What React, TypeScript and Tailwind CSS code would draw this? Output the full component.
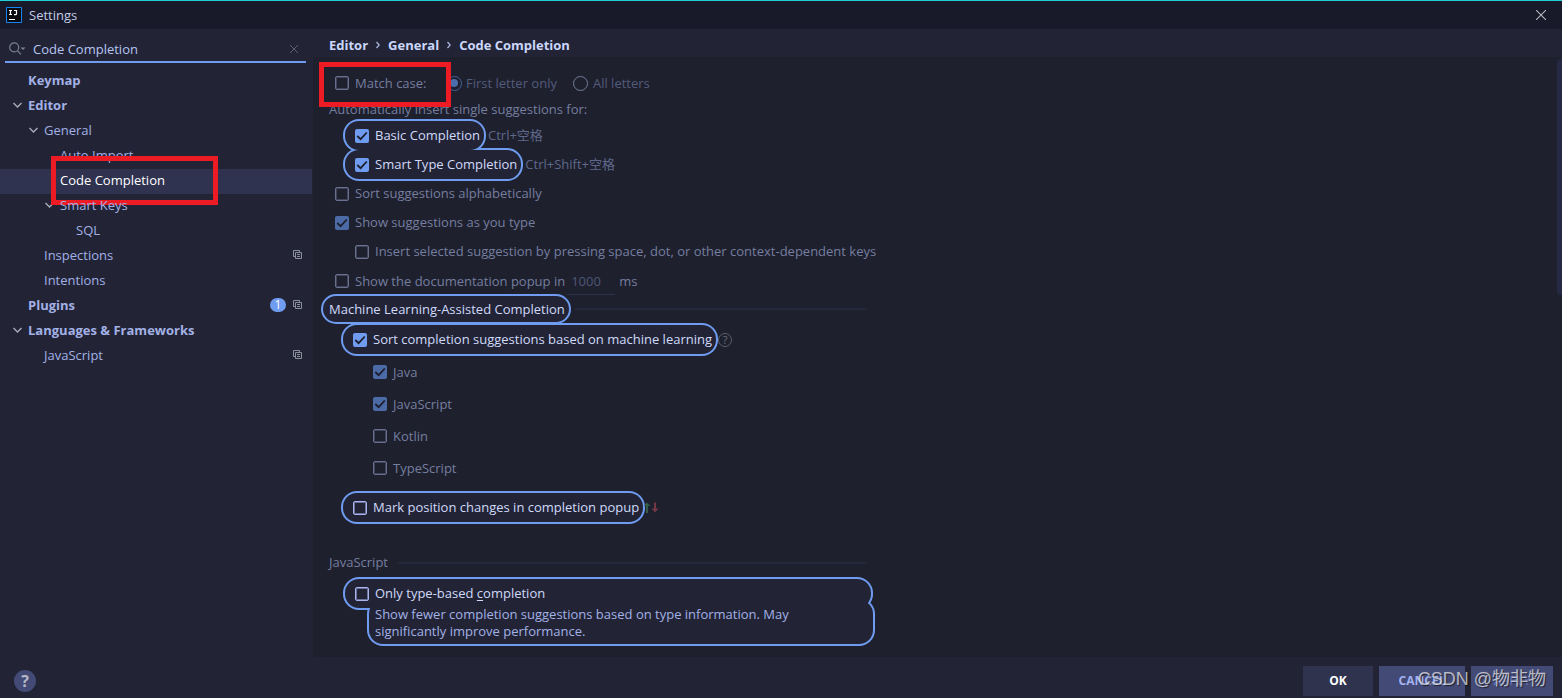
import type { ReactNode } from 'react'

interface TreeItem {
  label: string
  level: number
  bold?: boolean
  open?: boolean
  selected?: boolean
  badge?: number
  copy?: boolean
}

const TREE: TreeItem[] = [
  { label: 'Keymap', level: 0, bold: true },
  { label: 'Editor', level: 0, bold: true, open: true },
  { label: 'General', level: 1, open: true },
  { label: 'Auto Import', level: 2 },
  { label: 'Code Completion', level: 2, selected: true },
  { label: 'Smart Keys', level: 2, open: true },
  { label: 'SQL', level: 3 },
  { label: 'Inspections', level: 1, copy: true },
  { label: 'Intentions', level: 1 },
  { label: 'Plugins', level: 0, bold: true, badge: 1, copy: true },
  { label: 'Languages & Frameworks', level: 0, bold: true, open: true },
  { label: 'JavaScript', level: 1, copy: true },
]

const INDENT = ['pl-3', 'pl-7', 'pl-11', 'pl-15']

const ML_LANGUAGES = [
  { label: 'Java', checked: true },
  { label: 'JavaScript', checked: true },
  { label: 'Kotlin', checked: false },
  { label: 'TypeScript', checked: false },
]

// The outline sits two layers below the text and the fill one layer below,
// so neighbouring highlights melt into one shape.
const RING =
  'relative before:absolute before:-z-20 before:rounded-2xl before:bg-[#6f9cf0] after:absolute after:-z-10 after:rounded-[14px] after:bg-[#222435]'
const RING_ROW = 'before:-left-3 before:-right-1.5 after:-left-2.5 after:-right-1'
const RING_TALL = 'before:-inset-y-0.5 after:inset-y-0'
const RING_FLUSH = 'before:inset-y-0 after:inset-y-0.5'

function Chevron() {
  return (
    <svg className="w-2.5 h-2.5" viewBox="0 0 10 10" fill="none" stroke="#a9abb5" strokeWidth="1.4">
      <path d="M1.5 3l4 4 4-4" />
    </svg>
  )
}

function CopyIcon() {
  return (
    <svg className="w-[9px] h-[9px]" viewBox="0 0 9 9" fill="none" stroke="#8b8e9b">
      <path d="M2.5 6.5h-2v-6h6v2" />
      <path d="M2.5 2.5h6v6h-6zM4 4.5h3M4 6.5h3" />
    </svg>
  )
}

function TreeRow({ item }: { item: TreeItem }) {
  return (
    <li
      className={`flex items-center h-[25px] mr-px pr-2.5 pb-1 ${INDENT[item.level]} ${
        item.selected ? 'bg-[#303350] text-white' : 'text-[#a3b1e6]'
      }`}
    >
      <span className="w-4 shrink-0">{item.open && <Chevron />}</span>
      <span className={`relative leading-5 ${item.bold ? 'font-bold' : ''}`}>
        {item.label}
        {item.selected && (
          <span className="absolute -left-[9px] -top-3.5 w-[167px] h-[49px] border-5 border-[#ed1c24]" />
        )}
      </span>
      <span className="ml-auto flex items-center gap-[7px]">
        {item.badge && (
          <span className="w-4 h-3.5 rounded-full bg-[#6f9cf0] text-white text-xs leading-[14px] text-center">
            {item.badge}
          </span>
        )}
        {item.copy && <CopyIcon />}
      </span>
    </li>
  )
}

interface CheckProps {
  children: ReactNode
  checked?: boolean
  bright?: boolean
  className?: string
}

function Check({ children, checked, bright, className = '' }: CheckProps) {
  return (
    <label className={`flex items-center gap-1.5 ${bright ? 'text-[#d0dafa]' : 'text-[#757e9f]'} ${className}`}>
      <span className="grid w-3.5 h-3.5 shrink-0">
        <input
          type="checkbox"
          defaultChecked={checked}
          className={`peer appearance-none [grid-area:1/1] w-3.5 h-3.5 rounded-xs border checked:border-0 checked:shadow-none ${
            bright
              ? 'border-[#a9b5ec] checked:bg-[#6f9cf0] shadow-[inset_0_0_0_1px_#6a719b]'
              : 'border-[#69718f] checked:bg-[#4c6aa6] shadow-[inset_0_0_0_1px_#3f445b]'
          }`}
        />
        <svg
          className="[grid-area:1/1] w-3.5 h-3.5 hidden peer-checked:block pointer-events-none"
          viewBox="0 0 14 14"
          fill="none"
          stroke="#1c1e2c"
          strokeWidth="1.8"
        >
          <path d="M2.3 7l3.3 3.2L11.8 3.5" />
        </svg>
      </span>
      <span className="leading-5 pb-px">{children}</span>
    </label>
  )
}

function Radio({ label, checked }: { label: string; checked?: boolean }) {
  return (
    <label className="flex items-center gap-1 text-[#535b7b]">
      <span className="grid place-items-center w-4 h-4">
        <input
          type="radio"
          name="match-case"
          defaultChecked={checked}
          className="peer appearance-none [grid-area:1/1] w-[15px] h-[15px] rounded-full border border-[#757d9c] checked:border-[#44619a]"
        />
        <span className="[grid-area:1/1] w-2 h-2 rounded-full peer-checked:bg-[#4c6dab]" />
      </span>
      <span className="leading-5 pb-px">{label}</span>
    </label>
  )
}

function Sidebar() {
  return (
    <aside className="w-[313px] shrink-0 flex flex-col">
      <div className="ml-[5px] mr-[7px] h-[34px] pt-2 pl-1 pr-2 flex items-center border-b-2 border-[#6f9cf0]">
        <svg className="w-[17px] h-3.5 shrink-0" viewBox="0 0 17 14" fill="none" stroke="#7d808d" strokeWidth="1.2">
          <circle cx="5.2" cy="5.4" r="4.5" />
          <path d="M8.5 8.8l3.5 3.5" />
          <path d="M11.5 5.5h5l-2.5 2.5z" fill="#7d808d" stroke="none" />
        </svg>
        <input
          type="text"
          aria-label="Search settings"
          defaultValue="Code Completion"
          className="flex-1 min-w-0 ml-[7px] h-5 bg-transparent text-[#b7c4f2] outline-none"
        />
        <button type="button" aria-label="Clear">
          <svg className="w-2 h-2" viewBox="0 0 8 8" stroke="#5d606f">
            <path d="M0 0l8 8M8 0l-8 8" />
          </svg>
        </button>
      </div>
      <ul className="pt-1.5">
        {TREE.map((item) => (
          <TreeRow key={item.label} item={item} />
        ))}
      </ul>
    </aside>
  )
}

function Breadcrumb() {
  return (
    <nav className="h-7 pl-4 pt-1 flex items-center gap-2 font-bold text-[#cbd6fb]">
      <span>Editor</span>
      <Separator />
      <span>General</span>
      <Separator />
      <span>Code Completion</span>
    </nav>
  )
}

function Separator() {
  return (
    <svg className="w-1 h-2" viewBox="0 0 4 8" fill="none" stroke="#a9b5dc" strokeWidth="1.3">
      <path d="M0.5 1l2.7 3-2.7 3" />
    </svg>
  )
}

function Panel() {
  return (
    <div className="relative isolate flex-1 min-h-0 overflow-hidden bg-[#1e202e] pl-4 pt-[11px]">
      <div className="max-w-[538px]">
        <div className="flex items-center h-[30px] pl-1.5">
          <div className="relative z-10 w-[111px]">
            <Check>Match case:</Check>
            <span className="absolute -left-4 -top-[11px] w-[132px] h-[45px] border-5 border-[#ed1c24]" />
          </div>
          <div className="flex gap-4">
            <Radio label="First letter only" checked />
            <Radio label="All letters" />
          </div>
        </div>
        <p className="h-[23px] leading-[23px] text-[#757e9f]">Automatically insert single suggestions for:</p>

        <div className="pl-[26px] flex items-center gap-2">
          <Check bright checked className={`h-[29px] ${RING} ${RING_ROW} ${RING_TALL}`}>
            Basic Completion
          </Check>
          <span className="pb-0.5 text-[#5f688b]">Ctrl+空格</span>
        </div>
        <div className="pl-[26px] flex items-center gap-2">
          <Check bright checked className={`h-[29px] ${RING} ${RING_ROW} ${RING_TALL}`}>
            Smart Type Completion
          </Check>
          <span className="pb-0.5 text-[#5f688b]">Ctrl+Shift+空格</span>
        </div>
        <Check className="h-[29px] ml-1.5">Sort suggestions alphabetically</Check>
        <Check checked className="h-[29px] ml-1.5">
          Show suggestions as you type
        </Check>
        <Check className="h-[29px] ml-[26px] whitespace-nowrap">
          Insert selected suggestion by pressing space, dot, or other context-dependent keys
        </Check>
        <div className="flex items-center h-[30px] pl-1.5 text-[#757e9f]">
          <Check>Show the documentation popup in</Check>
          <input
            type="text"
            aria-label="Popup delay"
            defaultValue="1000"
            className="w-12 h-7 ml-0.5 mr-1 px-1 bg-transparent border-b border-[#2d3150] text-[#4f5675] outline-none"
          />
          <span>ms</span>
        </div>

        {/* Machine learning */}
        <div className="flex items-center h-[26px]">
          <h2
            className={`leading-[26px] text-[#d0dafa] ${RING} before:-left-2 before:-right-1.5 before:-inset-y-0.5 after:-left-1.5 after:-right-1 after:inset-y-0`}
          >
            Machine Learning-Assisted Completion
          </h2>
          <hr className="flex-1 ml-2.5 border-0 h-0.5 bg-[#25273a]" />
        </div>
        <div className="mt-px pl-6 flex items-center gap-1.5">
          <Check bright checked className={`h-[33px] ${RING} ${RING_ROW} ${RING_FLUSH}`}>
            Sort completion suggestions based on machine learning
          </Check>
          <button
            type="button"
            aria-label="About machine learning sorting"
            className="w-3.5 h-3.5 rounded-full border border-[#5a5d6b] text-[#6b6e7b] text-[11px] leading-3"
          >
            ?
          </button>
        </div>
        <div className="pl-11">
          {ML_LANGUAGES.map((lang) => (
            <Check key={lang.label} checked={lang.checked} className="h-8">
              {lang.label}
            </Check>
          ))}
        </div>
        <div className="mt-[7px] pl-6 flex items-center gap-1">
          <Check bright className={`h-[33px] ${RING} ${RING_ROW} ${RING_FLUSH}`}>
            Mark position changes in completion popup
          </Check>
          <svg className="w-4 h-3" viewBox="0 0 16 12">
            <path d="M3 11V4H0.5L4 0.5 7.5 4H5v7z" fill="#355c46" />
            <path d="M11 0.5v6H8.5L12 10.5 15.5 6.5H13v-6z" fill="#743845" />
          </svg>
        </div>

        {/* JavaScript */}
        <div className="flex items-center h-[26px] mt-[26px]">
          <h2 className="pb-0.5 text-[#757e9f]">JavaScript</h2>
          <hr className="flex-1 ml-2.5 border-0 h-0.5 bg-[#25273a]" />
        </div>
        <div className="pl-[26px]">
          <Check bright className={`h-[33px] mt-px ${RING} ${RING_ROW} ${RING_FLUSH}`}>
            Only type-based <span className="underline underline-offset-2">c</span>ompletion
          </Check>
          <p
            className={`-mt-1 ml-5 leading-[17px] text-[#a3b1e6] ${RING} before:-inset-x-2 before:-top-2 before:-bottom-1.5 after:-inset-x-1.5 after:-top-1.5 after:-bottom-1`}
          >
            Show fewer completion suggestions based on type information. May
            <br />
            significantly improve performance.
          </p>
        </div>
      </div>
      <div className="absolute right-0 top-0.5 w-[5px] h-[236px] rounded-l-sm bg-[#252a42]" />
    </div>
  )
}

function Footer() {
  const button = 'h-[30px] pt-px font-bold'
  return (
    <footer className="relative h-[41px] shrink-0 flex items-center pl-3.5 pr-[9px] pt-1.5 text-xs">
      <button
        type="button"
        aria-label="Help"
        className="w-[22px] h-[22px] rounded-full bg-[#444a76] text-[#b4b7c4] text-base leading-[22px] font-bold"
      >
        ?
      </button>
      <div className="ml-auto flex gap-1.5">
        <button type="button" className={`${button} w-[70px] bg-[#2f334e] text-white`}>
          OK
        </button>
        <button type="button" className={`${button} w-[86px] bg-[#444a76] text-[#a3b4f0]`}>
          CANCEL
        </button>
        <button type="button" className={`${button} w-[82px] bg-[#444a76] text-[#5e6ba8]`}>
          APPLY
        </button>
      </div>
      <span className="absolute right-4 top-2.5 text-lg leading-6 text-white/65 font-['Liberation_Sans','Noto_Sans_CJK_SC',sans-serif] [text-shadow:1px_1px_1px_rgba(0,0,0,0.6)]">
        CSDN @物非物
      </span>
    </footer>
  )
}

export default function App() {
  return (
    <div className="h-screen flex flex-col bg-[#222435] text-[13px] leading-5 font-['Open_Sans','Noto_Sans_CJK_SC',sans-serif]">
      <header className="h-[29px] shrink-0 flex items-center border-t border-[#1fd0d4] bg-[#191a29] pl-1.5 pr-4 text-[#c3cbe6]">
        <svg className="w-4 h-4" viewBox="0 0 16 16" fill="none">
          <path d="M0.5 0.5h15v15h-15z" fill="#0b0b10" stroke="#1585f5" />
          <path d="M3 3.5h3M4.5 3.5v4M3 7.5h3M8 3.5h2.5v3.2q0 .9-1 .9h-1.5M3 12.5h6" stroke="#fff" strokeWidth="1.2" />
        </svg>
        <h1 className="ml-[7px]">Settings</h1>
        <button type="button" aria-label="Close" className="ml-auto">
          <svg className="w-2.5 h-2.5" viewBox="0 0 10 10" stroke="#b5b6bd" strokeWidth="1.1">
            <path d="M0 0l10 10M10 0L0 10" />
          </svg>
        </button>
      </header>
      <div className="flex flex-1 min-h-0">
        <Sidebar />
        <main className="flex-1 min-w-0 flex flex-col">
          <Breadcrumb />
          <Panel />
        </main>
      </div>
      <Footer />
    </div>
  )
}
